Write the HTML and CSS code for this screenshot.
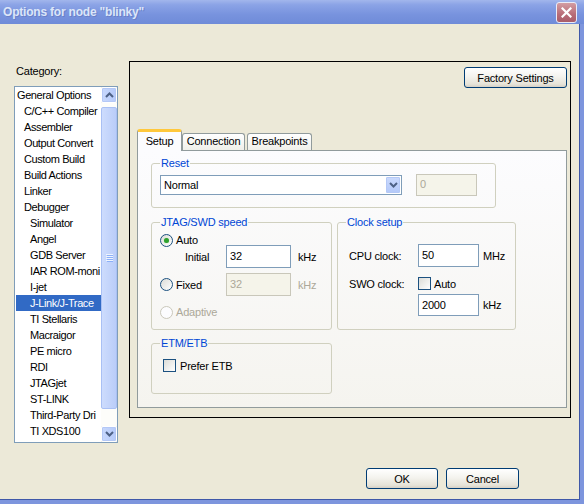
FILE: index.html
```html
<!DOCTYPE html>
<html lang="en">
<head>
    <meta charset="UTF-8">
    <title>Options for node "blinky"</title>
    <link rel="stylesheet" href="styles.css">
</head>
<body>
    <div class="window">
        <div class="titlebar">
            <span class="title">Options for node "blinky"</span>
            <span class="close-btn">
                <svg width="11" height="11" viewBox="0 0 11 11"><path d="M1.5 1.5 L9.5 9.5 M9.5 1.5 L1.5 9.5" stroke="#fff" stroke-width="2.2" stroke-linecap="square"/></svg>
            </span>
        </div>

        <div class="client">
            <div class="main">
                <!-- Category list -->
                <div class="category">
                    <div class="cat-label">Category:</div>
                    <div class="listbox">
                        <ul class="items">
                            <li class="lvl0">General Options</li>
                            <li class="lvl1">C/C++ Compiler</li>
                            <li class="lvl1">Assembler</li>
                            <li class="lvl1">Output Convert</li>
                            <li class="lvl1">Custom Build</li>
                            <li class="lvl1">Build Actions</li>
                            <li class="lvl1">Linker</li>
                            <li class="lvl1">Debugger</li>
                            <li class="lvl2">Simulator</li>
                            <li class="lvl2">Angel</li>
                            <li class="lvl2">GDB Server</li>
                            <li class="lvl2">IAR ROM-moni</li>
                            <li class="lvl2">I-jet</li>
                            <li class="lvl2 selected">J-Link/J-Trace</li>
                            <li class="lvl2">TI Stellaris</li>
                            <li class="lvl2">Macraigor</li>
                            <li class="lvl2">PE micro</li>
                            <li class="lvl2">RDI</li>
                            <li class="lvl2">JTAGjet</li>
                            <li class="lvl2">ST-LINK</li>
                            <li class="lvl2">Third-Party Dri</li>
                            <li class="lvl2">TI XDS100</li>
                        </ul>
                        <div class="scrollbar">
                            <div class="sb-btn">
                                <svg width="9" height="6" viewBox="0 0 9 6"><path d="M1 5 L4.5 1.5 L8 5" fill="none" stroke="#4d6185" stroke-width="2"/></svg>
                            </div>
                            <div class="sb-track">
                                <div class="sb-thumb">
                                    <svg width="7" height="8" viewBox="0 0 7 8"><path d="M0 0.5 H7 M0 2.5 H7 M0 4.5 H7 M0 6.5 H7" stroke="#eef4fe" stroke-width="1"/><path d="M1 1.5 H7 M1 3.5 H7 M1 5.5 H7 M1 7.5 H7" stroke="#8cb0f8" stroke-width="1"/></svg>
                                </div>
                            </div>
                            <div class="sb-btn">
                                <svg width="9" height="6" viewBox="0 0 9 6"><path d="M1 1 L4.5 4.5 L8 1" fill="none" stroke="#4d6185" stroke-width="2"/></svg>
                            </div>
                        </div>
                    </div>
                </div>

                <!-- Options frame -->
                <div class="frame">
                    <div class="frame-top">
                        <button class="btn btn-factory">Factory Settings</button>
                    </div>

                    <div class="tabs">
                        <div class="tab tab-setup active">Setup</div>
                        <div class="tab tab-connection">Connection</div>
                        <div class="tab tab-breakpoints">Breakpoints</div>
                    </div>

                    <div class="tab-page">
                        <fieldset class="group group-reset">
                            <legend>Reset</legend>
                            <div class="row row-reset">
                                <div class="combo">
                                    <span class="combo-text">Normal</span>
                                    <span class="combo-btn">
                                        <svg width="9" height="6" viewBox="0 0 9 6"><path d="M1 1 L4.5 4.5 L8 1" fill="none" stroke="#4d6185" stroke-width="2"/></svg>
                                    </span>
                                </div>
                                <div class="field field-reset disabled">0</div>
                            </div>
                        </fieldset>

                        <div class="group-row">
                            <fieldset class="group group-jtag">
                                <legend>JTAG/SWD speed</legend>
                                <div class="row row-auto">
                                    <span class="radio checked"></span>
                                    <span class="opt-label">Auto</span>
                                </div>
                                <div class="row row-initial">
                                    <span class="initial-label">Initial</span>
                                    <div class="field field-speed">32</div>
                                    <span class="unit">kHz</span>
                                </div>
                                <div class="row row-fixed">
                                    <span class="radio-wrap">
                                        <span class="radio"></span>
                                        <span class="opt-label">Fixed</span>
                                    </span>
                                    <div class="field field-speed disabled">32</div>
                                    <span class="unit disabled-text">kHz</span>
                                </div>
                                <div class="row row-adaptive">
                                    <span class="radio disabled"></span>
                                    <span class="opt-label disabled-text">Adaptive</span>
                                </div>
                            </fieldset>

                            <fieldset class="group group-clock">
                                <legend>Clock setup</legend>
                                <div class="row row-cpu">
                                    <span class="clock-label">CPU clock:</span>
                                    <div class="field field-clock">50</div>
                                    <span class="unit unit-clock">MHz</span>
                                </div>
                                <div class="row row-swo">
                                    <span class="clock-label">SWO clock:</span>
                                    <span class="checkbox"></span>
                                    <span class="opt-label">Auto</span>
                                </div>
                                <div class="row row-swo-value">
                                    <div class="field field-clock field-short">2000</div>
                                    <span class="unit unit-clock">kHz</span>
                                </div>
                            </fieldset>
                        </div>

                        <fieldset class="group group-etm">
                            <legend>ETM/ETB</legend>
                            <div class="row row-etb">
                                <span class="checkbox"></span>
                                <span class="opt-label etb-label">Prefer ETB</span>
                            </div>
                        </fieldset>
                    </div>
                </div>
            </div>

            <div class="footer">
                <button class="btn btn-ok">OK</button>
                <button class="btn btn-cancel">Cancel</button>
            </div>
        </div>
    </div>
</body>
</html>
```

FILE: styles.css
```css
:root {
    --face-color: #ece9d8;
    --title-color: #7b96df;
    --input-border: #7f9db9;
    --group-border: #d0d0bf;
    --tab-border: #919b9c;
    --legend-color: #0046d5;
    --disabled-color: #aca899;
    --select-color: #316ac5;
    --control-dark: #1c5180;
}

* {
    box-sizing: border-box;
    margin: 0;
    padding: 0;
}

body {
    width: 584px;
    height: 504px;
    overflow: hidden;
    font-family: "Liberation Sans", Arial, sans-serif;
    font-size: 11px;
    letter-spacing: -0.2px;
    color: #000;
    background: var(--title-color);
}

.window {
    width: 584px;
    height: 504px;
    background: #7d95dd;
}

/* Title bar */
.titlebar {
    height: 24px;
    display: flex;
    align-items: center;
    justify-content: space-between;
    padding: 0 7px 0 3px;
    background: linear-gradient(to bottom, #a2b6ec 0%, #8ba3e6 20%, #7893de 60%, #6f8bd8 100%);
}

.title {
    color: #dce6f9;
    font-weight: bold;
    font-size: 12px;
    letter-spacing: -0.2px;
    text-shadow: 1px 1px 0 #6a80c8;
}

.close-btn {
    width: 21px;
    height: 21px;
    display: flex;
    align-items: center;
    justify-content: center;
    border: 1px solid #e9ecf8;
    border-radius: 3px;
    background: linear-gradient(to bottom, #d39da3, #b86c77 60%, #a95d6a);
}

/* Client area */
.client {
    width: 580px;
    height: 476px;
    padding-top: 37px;
    background: var(--face-color);
    border-right: 1px solid #3f58a8;
    border-bottom: 1px solid #3f58a8;
}

.main {
    display: flex;
    align-items: flex-start;
    padding-left: 14px;
}

.category {
    width: 104px;
    padding-top: 4px;
}

.cat-label {
    line-height: 13px;
    padding-left: 2px;
    margin-bottom: 8px;
}

.listbox {
    height: 357px;
    display: flex;
    background: #fff;
    border: 1px solid var(--input-border);
}

.items {
    list-style: none;
    flex: 1;
    overflow: hidden;
}

.items li {
    height: 16px;
    line-height: 16px;
    margin-left: 1px;
    letter-spacing: -0.4px;
    white-space: nowrap;
    overflow: hidden;
}

.items .lvl0 { padding-left: 1px; }
.items .lvl1 { padding-left: 8px; }
.items .lvl2 { padding-left: 14px; }

.items .selected {
    background: var(--select-color);
    color: #fff;
}

.scrollbar {
    width: 16px;
    display: flex;
    flex-direction: column;
    background: #f4f3ee;
}

.sb-btn {
    height: 16px;
    display: flex;
    align-items: center;
    justify-content: center;
    border: 1px solid #fff;
    border-radius: 2px;
    background: linear-gradient(to right, #c8d8fc, #b5cafa);
    box-shadow: inset 0 0 0 1px #b4c8f6;
}

.sb-track {
    flex: 1;
    padding: 4px 0 17px;
    background: #fdfdfa;
}

.sb-thumb {
    height: 100%;
    display: flex;
    align-items: center;
    justify-content: center;
    border: 1px solid #a9c0f4;
    border-radius: 2px;
    background: linear-gradient(to right, #cddcfd, #bacdf9);
}

/* Options frame */
.frame {
    width: 442px;
    height: 357px;
    margin-left: 11px;
    padding: 5px 3px 0 7px;
    border: 1px solid #000;
}

.frame-top {
    display: flex;
    justify-content: flex-end;
}

.btn {
    height: 21px;
    font-family: inherit;
    font-size: 11px;
    letter-spacing: -0.2px;
    color: #000;
    border: 1px solid #003c74;
    border-radius: 3px;
    background: linear-gradient(to bottom, #ffffff 0%, #f4f3ee 45%, #e6e3d8 85%, #d6d0c5 100%);
}

.btn-factory {
    width: 103px;
}

.tabs {
    display: flex;
    align-items: flex-end;
    height: 21px;
    margin-top: 41px;
}

.tab {
    height: 17px;
    line-height: 15px;
    text-align: center;
    border: 1px solid var(--tab-border);
    border-bottom: none;
    border-radius: 3px 3px 0 0;
    background: linear-gradient(to bottom, #ffffff, #f0f0ea);
}

.tab.active {
    position: relative;
    height: 22px;
    line-height: 19px;
    margin-bottom: -1px;
    background: #fcfcfe;
    border-top: 3px solid #ffc83c;
}

.tab-setup { width: 45px; }
.tab-connection { width: 63px; }
.tab-breakpoints { width: 65px; margin-left: 2px; }

.tab-page {
    width: 430px;
    height: 258px;
    padding: 6px 0 0 13px;
    border: 1px solid var(--tab-border);
    background: linear-gradient(to bottom, #fcfcfe, #f5f4ef);
}

/* Group boxes */
.group {
    border: 1px solid var(--group-border);
    border-radius: 3px;
    padding: 0 8px;
}

.group legend {
    color: var(--legend-color);
    line-height: 13px;
    padding: 0 1px;
}

.row {
    display: flex;
    align-items: center;
}

.field {
    height: 22px;
    padding: 2px 3px 0;
    line-height: 14px;
    background: #fff;
    border: 1px solid var(--input-border);
}

.field.disabled {
    color: var(--disabled-color);
    background: #f5f4ea;
    border-color: #c9c7ba;
}

.disabled-text {
    color: var(--disabled-color);
}

.unit {
    margin-left: 7px;
}

.group-reset {
    width: 345px;
    height: 51px;
}

.row-reset {
    height: 22px;
    margin-top: 4px;
}

.combo {
    width: 242px;
    height: 20px;
    display: flex;
    background: #fff;
    border: 1px solid var(--input-border);
}

.combo-text {
    flex: 1;
    line-height: 18px;
    padding-left: 3px;
}

.combo-btn {
    width: 16px;
    display: flex;
    align-items: center;
    justify-content: center;
    border: 1px solid #fff;
    border-radius: 2px;
    background: linear-gradient(to bottom, #cbdafd, #b3c8f9);
    box-shadow: inset 0 0 0 1px #b4c8f6;
}

.field-reset {
    width: 61px;
    margin-left: 14px;
}

.group-row {
    display: flex;
    gap: 5px;
    margin-top: 8px;
}

.group-jtag {
    width: 181px;
    height: 114px;
}

.radio,
.checkbox {
    width: 13px;
    height: 13px;
    flex-shrink: 0;
    border: 1px solid var(--control-dark);
    background: linear-gradient(135deg, #dcdcd7, #ffffff);
}

.radio {
    border-radius: 50%;
    display: flex;
    align-items: center;
    justify-content: center;
}

.radio.checked::after {
    content: "";
    width: 5px;
    height: 5px;
    border-radius: 50%;
    background: #2ea12e;
    box-shadow: 0 0 1px #8fd48f;
}

.radio.disabled {
    border-color: #cac8bb;
    background: #fcfcfe;
}

.opt-label {
    margin-left: 3px;
}

.row-auto {
    height: 10px;
    margin-top: 6px;
}

.row-initial {
    height: 23px;
    padding-left: 25px;
}

.initial-label {
    width: 41px;
}

.field-speed {
    width: 65px;
    height: 23px;
    padding-top: 3px;
}

.row-fixed {
    height: 23px;
    margin-top: 5px;
}

.radio-wrap {
    width: 66px;
    display: flex;
    align-items: center;
}

.row-adaptive {
    height: 12px;
    margin-top: 10px;
}

.group-clock {
    width: 179px;
    height: 114px;
    padding-left: 11px;
}

.group-clock legend {
    margin-left: -3px;
}

.clock-label {
    width: 69px;
}

.field-clock {
    width: 61px;
    height: 23px;
    padding-top: 3px;
}

.field-short {
    height: 22px;
}

.unit-clock {
    margin-left: 4px;
}

.row-cpu {
    height: 23px;
    margin-top: 15px;
}

.row-swo {
    height: 13px;
    margin-top: 10px;
}

.row-swo-value {
    height: 22px;
    margin-top: 4px;
    padding-left: 69px;
}

.group-etm {
    width: 181px;
    height: 57px;
    margin-top: 7px;
}

.row-etb {
    height: 13px;
    margin-top: 9px;
    padding-left: 3px;
}

.etb-label {
    margin-left: 4px;
}

/* Dialog buttons */
.footer {
    display: flex;
    justify-content: flex-end;
    gap: 8px;
    margin-top: 25px;
    padding-right: 60px;
}

.btn-ok { width: 72px; }
.btn-cancel { width: 73px; }
```
